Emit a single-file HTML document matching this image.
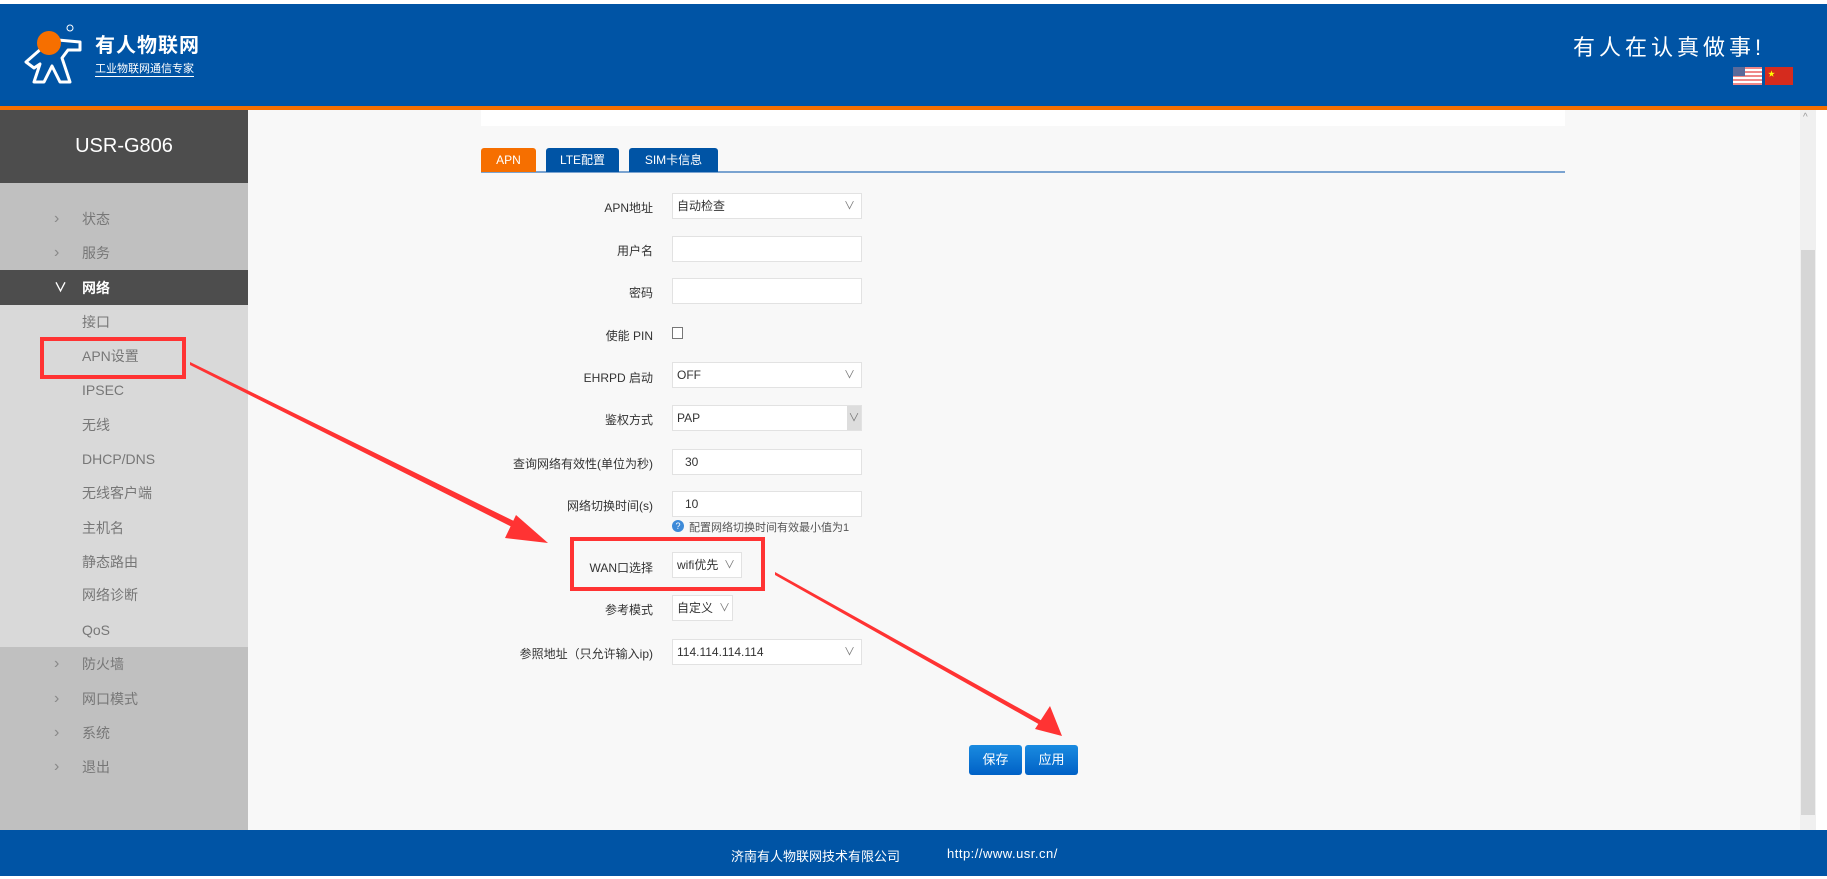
<!DOCTYPE html>
<html><head><meta charset="utf-8"><style>
*{margin:0;padding:0;box-sizing:border-box}
body{width:1827px;height:879px;background:#fff;position:relative;overflow:hidden;font-family:"Liberation Sans","Noto Sans CJK SC",sans-serif}
.a{position:absolute}
.hdr{left:0;top:4px;width:1827px;height:102px;background:#0054a5}
.org{left:0;top:106px;width:1827px;height:4px;background:#f66f00}
.side{left:0;top:110px;width:248px;height:720px}
.mi{position:absolute;left:0;width:248px;font-size:14px;color:#777;line-height:34px}
.mi span{position:absolute;left:82px}
.mi i{position:absolute;left:54px;font-style:normal;color:#888;font-size:16px}
.lbl{position:absolute;right:1174px;font-size:12px;color:#333;text-align:right;white-space:nowrap}
.inp{position:absolute;left:672px;width:190px;height:26px;background:#fff;border:1px solid #e2e2e2;font-size:12px;color:#333;line-height:24px;padding-left:4px}
.dd{position:absolute;right:6px;top:0;color:#777;font-size:11px}
.tab{position:absolute;top:148px;height:24px;color:#fff;font-size:12px;line-height:24px;text-align:center;border-radius:3px 3px 0 0}
.btn{position:absolute;top:745px;width:53px;height:30px;border-radius:3px;background:linear-gradient(#1a8be0,#0061c6);color:#fff;font-size:13px;line-height:30px;text-align:center}
</style></head><body>
<div class="a hdr"></div>
<div class="a org"></div>
<svg class="a" style="left:18px;top:18px" width="72" height="70" viewBox="0 0 72 70">
<path d="M24 30 L8 44 L16 50 L22 46 L16 64 L26 64 L34 48 L42 64 L52 64 L44 40 L50 32 L62 32 L62 24 L40 22 Z" fill="none" stroke="#fff" stroke-width="3" stroke-linejoin="round"/>
<circle cx="31" cy="25" r="12" fill="#f66f00"/>
<circle cx="52" cy="10" r="3" fill="none" stroke="#fff" stroke-width="1"/>
</svg>
<div class="a" style="left:95px;top:29px;color:#fff;font-size:20px;font-weight:bold;letter-spacing:1px">有人物联网</div>
<div class="a" style="left:95px;top:63px;color:#fff;font-size:11px;border-bottom:1px solid #fff;line-height:13px">工业物联网通信专家</div>
<div class="a" style="left:1573px;top:30px;color:#fff;font-size:22px;letter-spacing:4px">有人在认真做事!</div>
<div class="a" style="left:1733px;top:67px;width:29px;height:18px;background:repeating-linear-gradient(#e88 0 2px,#fff 2px 4px)"></div>
<div class="a" style="left:1733px;top:67px;width:12px;height:9px;background:#5a6a9a"></div>
<div class="a" style="left:1765px;top:67px;width:28px;height:18px;background:#d52b1e"></div>
<div class="a" style="left:1768px;top:69px;color:#ff0;font-size:7px">★</div>
<!-- scrollbar -->
<div class="a" style="left:1800px;top:110px;width:16px;height:720px;background:#f0f0f0"></div>
<div class="a" style="left:1801px;top:250px;width:14px;height:565px;background:#d6d6d6"></div>
<div class="a" style="left:1803px;top:112px;color:#999;font-size:10px">^</div>
<!-- content -->
<div class="a" style="left:248px;top:110px;width:1552px;height:720px;background:#f8f8f8"></div>
<div class="a" style="left:481px;top:110px;width:1084px;height:16px;background:#fff"></div>
<div class="a" style="left:481px;top:171px;width:1084px;height:2px;background:#7aa3d0"></div>
<div class="tab" style="left:481px;width:55px;background:#f66f00">APN</div>
<div class="tab" style="left:546px;width:73px;background:#0054a5">LTE配置</div>
<div class="tab" style="left:629px;width:89px;background:#0054a5">SIM卡信息</div>
<!-- sidebar -->
<div class="a side">
<div class="a" style="left:0;top:0;width:248px;height:73px;background:#4d4d4d;color:#fff;font-size:20px;text-align:center;line-height:73px">USR-G806</div>
<div class="a" style="left:0;top:73px;width:248px;height:87px;background:#c0c0c0"></div>
<div class="a" style="left:0;top:160px;width:248px;height:35px;background:#4d4d4d"></div>
<div class="a" style="left:0;top:195px;width:248px;height:342px;background:#d9d9d9"></div>
<div class="a" style="left:0;top:537px;width:248px;height:183px;background:#c0c0c0"></div>
</div>
<div class="mi" style="top:202px"><i>›</i><span>状态</span></div>
<div class="mi" style="top:236px"><i>›</i><span>服务</span></div>
<div class="mi" style="top:271px;color:#fff;font-weight:bold"><i style="color:#fff;font-size:13px">∨</i><span>网络</span></div>
<div class="mi" style="top:305px"><span>接口</span></div>
<div class="mi" style="top:339px"><span>APN设置</span></div>
<div class="mi" style="top:373px"><span>IPSEC</span></div>
<div class="mi" style="top:408px"><span>无线</span></div>
<div class="mi" style="top:442px"><span>DHCP/DNS</span></div>
<div class="mi" style="top:476px"><span>无线客户端</span></div>
<div class="mi" style="top:511px"><span>主机名</span></div>
<div class="mi" style="top:545px"><span>静态路由</span></div>
<div class="mi" style="top:578px"><span>网络诊断</span></div>
<div class="mi" style="top:613px"><span>QoS</span></div>
<div class="mi" style="top:647px"><i>›</i><span>防火墙</span></div>
<div class="mi" style="top:682px"><i>›</i><span>网口模式</span></div>
<div class="mi" style="top:716px"><i>›</i><span>系统</span></div>
<div class="mi" style="top:750px"><i>›</i><span>退出</span></div>
<!-- form -->
<div class="lbl" style="top:199px">APN地址</div><div class="inp" style="top:193px">自动检查<span class="dd">∨</span></div>
<div class="lbl" style="top:242px">用户名</div><div class="inp" style="top:236px"></div>
<div class="lbl" style="top:284px">密码</div><div class="inp" style="top:278px"></div>
<div class="lbl" style="top:327px">使能 PIN</div><div class="a" style="left:672px;top:327px;width:11px;height:12px;border:1px solid #777;background:#fff"></div>
<div class="lbl" style="top:369px">EHRPD 启动</div><div class="inp" style="top:362px">OFF<span class="dd">∨</span></div>
<div class="lbl" style="top:411px">鉴权方式</div><div class="inp" style="top:405px">PAP<span class="dd" style="right:0;width:14px;height:24px;background:#ddd;text-align:center">∨</span></div>
<div class="lbl" style="top:455px">查询网络有效性(单位为秒)</div><div class="inp" style="top:449px;padding-left:12px">30</div>
<div class="lbl" style="top:497px">网络切换时间(s)</div><div class="inp" style="top:491px;padding-left:12px">10</div>
<div class="a" style="left:672px;top:520px;width:12px;height:12px;border-radius:50%;background:#3d8ad8;color:#fff;font-size:9px;text-align:center;line-height:12px">?</div>
<div class="a" style="left:689px;top:519px;font-size:11px;color:#555">配置网络切换时间有效最小值为1</div>
<div class="lbl" style="top:559px">WAN口选择</div><div class="inp" style="top:552px;width:70px">wifi优先<span class="dd">∨</span></div>
<div class="lbl" style="top:601px">参考模式</div><div class="inp" style="top:595px;width:61px">自定义<span class="dd" style="right:2px">∨</span></div>
<div class="lbl" style="top:645px">参照地址（只允许输入ip)</div><div class="inp" style="top:639px">114.114.114.114<span class="dd">∨</span></div>
<div class="btn" style="left:969px">保存</div>
<div class="btn" style="left:1025px">应用</div>
<!-- annotations -->
<div class="a" style="left:40px;top:337px;width:146px;height:42px;border:4px solid #f33"></div>
<div class="a" style="left:570px;top:537px;width:195px;height:54px;border:4px solid #f33"></div>
<svg class="a" style="left:0;top:0" width="1827" height="879">
<polygon points="190,362 528,528 526,534 190,365" fill="#f33"/>
<polygon points="548,543 516,515 505,538" fill="#f33"/>
<polygon points="775,572 1044,722 1042,726 775,575" fill="#f33"/>
<polygon points="1062,736 1050,706 1035,729" fill="#f33"/>
</svg>
<!-- footer -->
<div class="a" style="left:0;top:830px;width:1827px;height:46px;background:#0054a5"></div>
<div class="a" style="left:731px;top:846px;color:#fff;font-size:13px">济南有人物联网技术有限公司</div>
<div class="a" style="left:947px;top:846px;color:#fff;font-size:13px;letter-spacing:0.5px">http://www.usr.cn/</div>
</body></html>
